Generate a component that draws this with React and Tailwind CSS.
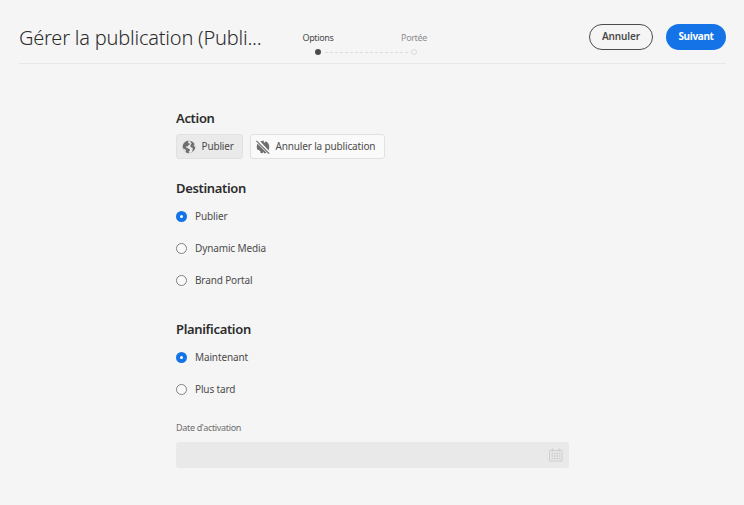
import React from "react";

const sans = "font-['Noto_Sans','Open_Sans',sans-serif]";

function Globe({ crossed }) {
  return (
    <svg width="14" height="14" viewBox="0 0 14 14" className="shrink-0">
      {crossed ? (
        <>
          <path
            d="M4.300 1.300C5.400 .7 6.700 .5 8 .7L7.600 2l1 .8 1.200-1.500C12 2.500 13.300 4.500 13.300 7c0 1.300-.3 2.400-.9 3.400z M1.700 3.600L10.800 12.400C9.900 13 9 13.200 8 13.300L7.300 11.500 6.600 13.300 4.600 12.900 4.200 11 2.500 9.900 1.200 9.500C.4 7.500.7 5.200 1.700 3.600z"
            fill="#6e6e6e"
          />
          <path d="M.5 .6L13.500 13.600" stroke="#fafafa" strokeWidth="2.800" />
          <path d="M.4 .9L13.200 13.700" stroke="#6e6e6e" strokeWidth="1.200" />
        </>
      ) : (
        <>
          <circle cx="7" cy="7" r="6" fill="none" stroke="#bdbdbd" strokeWidth=".7" />
          <path
            d="M6.600 .7C4 .8 1.700 2.500 .9 5C.6 6.200.7 7.200.9 8.200L2.700 8.900 4 10.200 3.800 12.200C4.800 12.900 5.900 13.200 7 13.200L6.800 11.600 8 10.200 7.500 8.900 5.600 8.200 4.100 7.400 4.300 6.200 5.600 6.400 6.500 5.200 7.900 4.200 7.200 3.100 5.800 3.200 6.200 2z M8.700 .9L8.400 2.300 9.700 3.300 8.700 4.500 8.300 6.200 9.300 7.600 10.500 7.800 10.700 9.300 10.100 11.800C12 10.900 13.200 9.100 13.200 7L12 6.300 11.500 5.200 12.500 4.100C11.800 2.600 10.400 1.300 8.700 .9z"
            fill="#6e6e6e"
          />
        </>
      )}
    </svg>
  );
}

function Calendar() {
  return (
    <svg width="14" height="14" viewBox="0 0 14 14" fill="none" stroke="#cecece">
      <path d="M.5 2.500h12.500v10.500H.5z" />
      <path d="M3.500 .5v3M10 .5v3" strokeWidth="1.500" />
      <path d="M2.500 5.500h9M2.500 8h9M2.500 10.500h9" strokeWidth="1.500" strokeDasharray="1.700 .7" />
    </svg>
  );
}

function Heading({ children, className = "" }) {
  return (
    <h2 className={`h-5 text-[13px] leading-5 font-semibold tracking-[-0.33px] text-[#2c2c2c] ${className}`}>
      {children}
    </h2>
  );
}

function Radio({ label, checked }) {
  return (
    <label className="flex h-8 items-center">
      <span
        className={`mr-2 flex size-[11px] shrink-0 items-center justify-center rounded-full ${
          checked ? "bg-[#1473e6]" : "border border-[#808080] bg-[#fafafa]"
        }`}
      >
        {checked && <span className="size-[3px] rounded-full bg-white" />}
      </span>
      <span className="text-[10px] leading-4 tracking-[-0.13px] text-[#4b4b4b]">{label}</span>
    </label>
  );
}

export default function App() {
  return (
    <div className={`h-[505px] w-[744px] overflow-hidden bg-[#f5f5f5] ${sans}`}>
      <header className="mr-[18px] ml-[19px] flex h-16 border-b border-[#e8e8e8]">
        <h1 className="mt-[22px] w-[260px] text-[20px] leading-8 font-light tracking-[-0.21px] whitespace-nowrap text-[#2c2c2c]">
          Gérer la publication (Publi...
        </h1>
        <div className="mt-[30px] ml-[-9px] w-[192px]">
          <div className="flex text-[9px] leading-4 tracking-[-0.35px]">
            <span className="w-24 text-center text-[#4b4b4b]">Options</span>
            <span className="w-24 text-center text-[#8e8e8e]">Portée</span>
          </div>
          <div className="ml-[45px] flex h-3 items-center">
            <span className="size-1.5 rounded-full bg-[#4b4b4b]" />
            <svg width="84" height="1" className="mr-[2px] ml-[4px]">
              <path d="M0 .5H84" stroke="#dcdcdc" strokeDasharray="3 2" />
            </svg>
            <span className="size-1.5 rounded-full border border-[#dadada]" />
          </div>
        </div>
        <div className="mt-6 ml-auto flex h-[26px] gap-[13px] text-[10px]">
          <button className="w-16 rounded-full border border-[#4b4b4b] pb-0.5 font-semibold tracking-[-0.1px] text-[#4b4b4b]">
            Annuler
          </button>
          <button className="w-[60px] rounded-full bg-[#1473e6] pb-0.5 font-bold tracking-[-0.33px] text-white">
            Suivant
          </button>
        </div>
      </header>
      <main className="ml-44 w-[393px] pt-11">
        <Heading>Action</Heading>
        <div className="mt-1.5 flex gap-[7px] text-[10px] tracking-[-0.15px] text-[#4b4b4b]">
          <button className="flex h-[25px] w-[67px] items-center gap-[5.500px] rounded-[3px] border border-[#e1e1e1] bg-[#eaeaea] pl-[5px]">
            <Globe />
            <span>Publier</span>
          </button>
          <button className="flex h-[25px] w-[135px] items-center gap-[6px] rounded-[3px] border border-[#e1e1e1] bg-[#fafafa] pl-[4.500px] whitespace-nowrap">
            <Globe crossed />
            <span>Annuler la publication</span>
          </button>
        </div>
        <Heading className="mt-[19px]">Destination</Heading>
        <div className="mt-0.5">
          <Radio label="Publier" checked />
          <Radio label="Dynamic Media" />
          <Radio label="Brand Portal" />
        </div>
        <Heading className="mt-[23px]">Planification</Heading>
        <div className="mt-0.5">
          <Radio label="Maintenant" checked />
          <Radio label="Plus tard" />
        </div>
        <p className="mt-[15px] h-4 text-[9px] leading-4 tracking-[-0.33px] text-[#6e6e6e]">
          Date d'activation
        </p>
        <div className="mt-1.5 flex h-[26px] items-center justify-end rounded-[3px] bg-[#e9e9e9] pr-1.5">
          <Calendar />
        </div>
      </main>
    </div>
  );
}
